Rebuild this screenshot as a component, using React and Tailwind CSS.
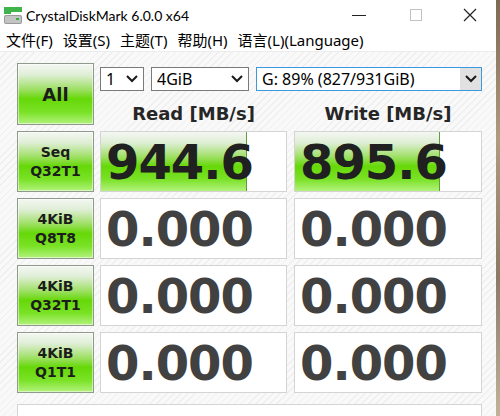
import React from 'react';

const uiFont = { fontFamily: '"Noto Sans", "Noto Sans CJK SC", sans-serif' };
const titleFont = { fontFamily: 'Lato, "Noto Sans", sans-serif' };
const boldFont = { fontFamily: '"DejaVu Sans", "Liberation Sans", sans-serif' };

// gradient used by the test buttons and the result bars
const greenBtn =
  'bg-[linear-gradient(to_bottom,#f4f7f2_0%,#dfeed6_18%,#9fe066_42%,#66d808_58%,#7ae226_80%,#b2f27c_100%)]';

const rows = [
  { a: 'Seq', b: 'Q32T1', read: '944.6', write: '895.6', readPct: 79, writePct: 78 },
  { a: '4KiB', b: 'Q8T8', read: '0.000', write: '0.000', readPct: 0, writePct: 0 },
  { a: '4KiB', b: 'Q32T1', read: '0.000', write: '0.000', readPct: 0, writePct: 0 },
  { a: '4KiB', b: 'Q1T1', read: '0.000', write: '0.000', readPct: 0, writePct: 0 },
];

const Chevron = () => (
  <svg width="14" height="10" viewBox="0 0 14 10">
    <path d="M2 2 L7 7 L12 2" fill="none" stroke="#1a1a1a" strokeWidth="2" />
  </svg>
);

const AppIcon = () => (
  <svg width="20" height="20" viewBox="0 0 20 20">
    <rect x="1" y="1" width="18" height="5" fill="#3fb44a" />
    <rect x="1" y="6" width="7" height="2" fill="#3fb44a" />
    <rect x="1" y="9" width="18" height="9" rx="2" fill="#9a9a9a" />
    <rect x="2" y="10" width="16" height="7" rx="1.5" fill="#c4c4c4" />
    <rect x="13" y="12" width="3" height="2" fill="#35b536" />
  </svg>
);

const TestButton = ({ children }) => (
  <div
    className={`w-[77px] h-full flex flex-col items-center justify-center border border-[#8f9a8c] shadow-[inset_0_0_0_1px_#ffffff80] text-[#1c1c1c] font-bold ${greenBtn}`}
    style={boldFont}
  >
    {children}
  </div>
);

const ResultBox = ({ value, pct, width }) => (
  <div className={`relative h-full bg-white border border-[#d4d4d4] ${width}`}>
    {pct > 0 && (
      <div
        className={`absolute left-0 top-0 bottom-0 border-r border-[#5f9d3d] ${greenBtn}`}
        style={{ width: `${pct}%` }}
      />
    )}
    <div
      className={`relative h-full flex items-center pl-[5px] text-[48px] font-bold tracking-[-1px] leading-none ${
        pct > 0 ? 'text-[#202020]' : 'text-[#414141]'
      }`}
      style={boldFont}
    >
      {value}
    </div>
  </div>
);

export default function App() {
  return (
    <div className="w-[500px] h-[416px] flex overflow-hidden bg-white" style={uiFont}>
      <div className="w-[496px] h-full flex flex-col">
        {/* title bar */}
        <div className="h-[30px] flex items-center bg-white shrink-0">
          <div className="pl-[3px] pr-[3px] pt-[2px]">
            <AppIcon />
          </div>
          <div className="text-[14px] text-black" style={titleFont}>CrystalDiskMark 6.0.0 x64</div>
          <div className="ml-auto flex items-center h-full">
            <div className="w-[57px] h-full flex items-center justify-center">
              <div className="w-[14px] h-[1px] bg-[#222]" />
            </div>
            <div className="w-[57px] h-full flex items-center justify-center">
              <div className="w-[12px] h-[12px] border border-[#c2c2c2]" />
            </div>
            <div className="w-[52px] h-full flex items-center justify-center">
              <svg width="14" height="14" viewBox="0 0 14 14">
                <path d="M1 1 L13 13 M13 1 L1 13" stroke="#222" strokeWidth="1.2" />
              </svg>
            </div>
          </div>
        </div>

        {/* menu bar */}
        <div className="h-[22px] flex items-center gap-[10px] pl-[6px] text-[15px] text-black bg-white border-b border-[#ececec] shrink-0">
          <span>文件(F)</span>
          <span>设置(S)</span>
          <span>主题(T)</span>
          <span>帮助(H)</span>
          <span>语言(L)(Language)</span>
        </div>

        {/* main panel */}
        <div className="flex-1 flex flex-col gap-[6px] pl-[17px] pt-[11px] bg-[#f7f7f7] bg-[repeating-linear-gradient(135deg,#f9f9f9_0px,#f9f9f9_4px,#efefef_4px,#efefef_5px)]">
          <div className="h-[62px] flex gap-[6px]">
            <TestButton>
              <span className="text-[18px]">All</span>
            </TestButton>
            <div className="flex flex-col">
              <div className="mt-[4px] h-[24px] flex gap-[7px] text-[16px] text-black">
                <div className="w-[44px] h-full flex items-center justify-between pl-[5px] pr-[4px] bg-white border border-[#7a7a7a]">
                  <span>1</span>
                  <Chevron />
                </div>
                <div className="w-[98px] h-full flex items-center justify-between pl-[5px] pr-[4px] bg-white border border-[#7a7a7a]">
                  <span>4GiB</span>
                  <Chevron />
                </div>
                <div className="w-[226px] h-full flex items-center bg-white border border-[#3a9ae0]">
                  <span className="flex-1 pl-[5px]">G: 89% (827/931GiB)</span>
                  <div className="w-[21px] h-full flex items-center justify-center bg-[#e1e1e1]">
                    <Chevron />
                  </div>
                </div>
              </div>
              <div className="flex gap-[7px] mt-[9px] text-[18px] font-bold text-[#262626]" style={boldFont}>
                <div className="w-[187px] text-center">Read [MB/s]</div>
                <div className="w-[188px] text-center">Write [MB/s]</div>
              </div>
            </div>
          </div>

          {rows.map((r) => (
            <div key={r.a + r.b} className="h-[61px] flex gap-[6px]">
              <TestButton>
                <span className="text-[14px] leading-[19px]">{r.a}</span>
                <span className="text-[14px] leading-[19px]">{r.b}</span>
              </TestButton>
              <div className="flex gap-[7px]">
                <ResultBox value={r.read} pct={r.readPct} width="w-[187px]" />
                <ResultBox value={r.write} pct={r.writePct} width="w-[188px]" />
              </div>
            </div>
          ))}

          {/* comment field */}
          <div className="mt-[5px] w-[465px] h-[20px] bg-white border border-[#d4d4d4]" />
        </div>
      </div>
      <div className="w-[4px] h-full bg-[linear-gradient(to_bottom,#7d6a55,#b09a80,#8c7a66,#c2b29c)]" />
    </div>
  );
}
